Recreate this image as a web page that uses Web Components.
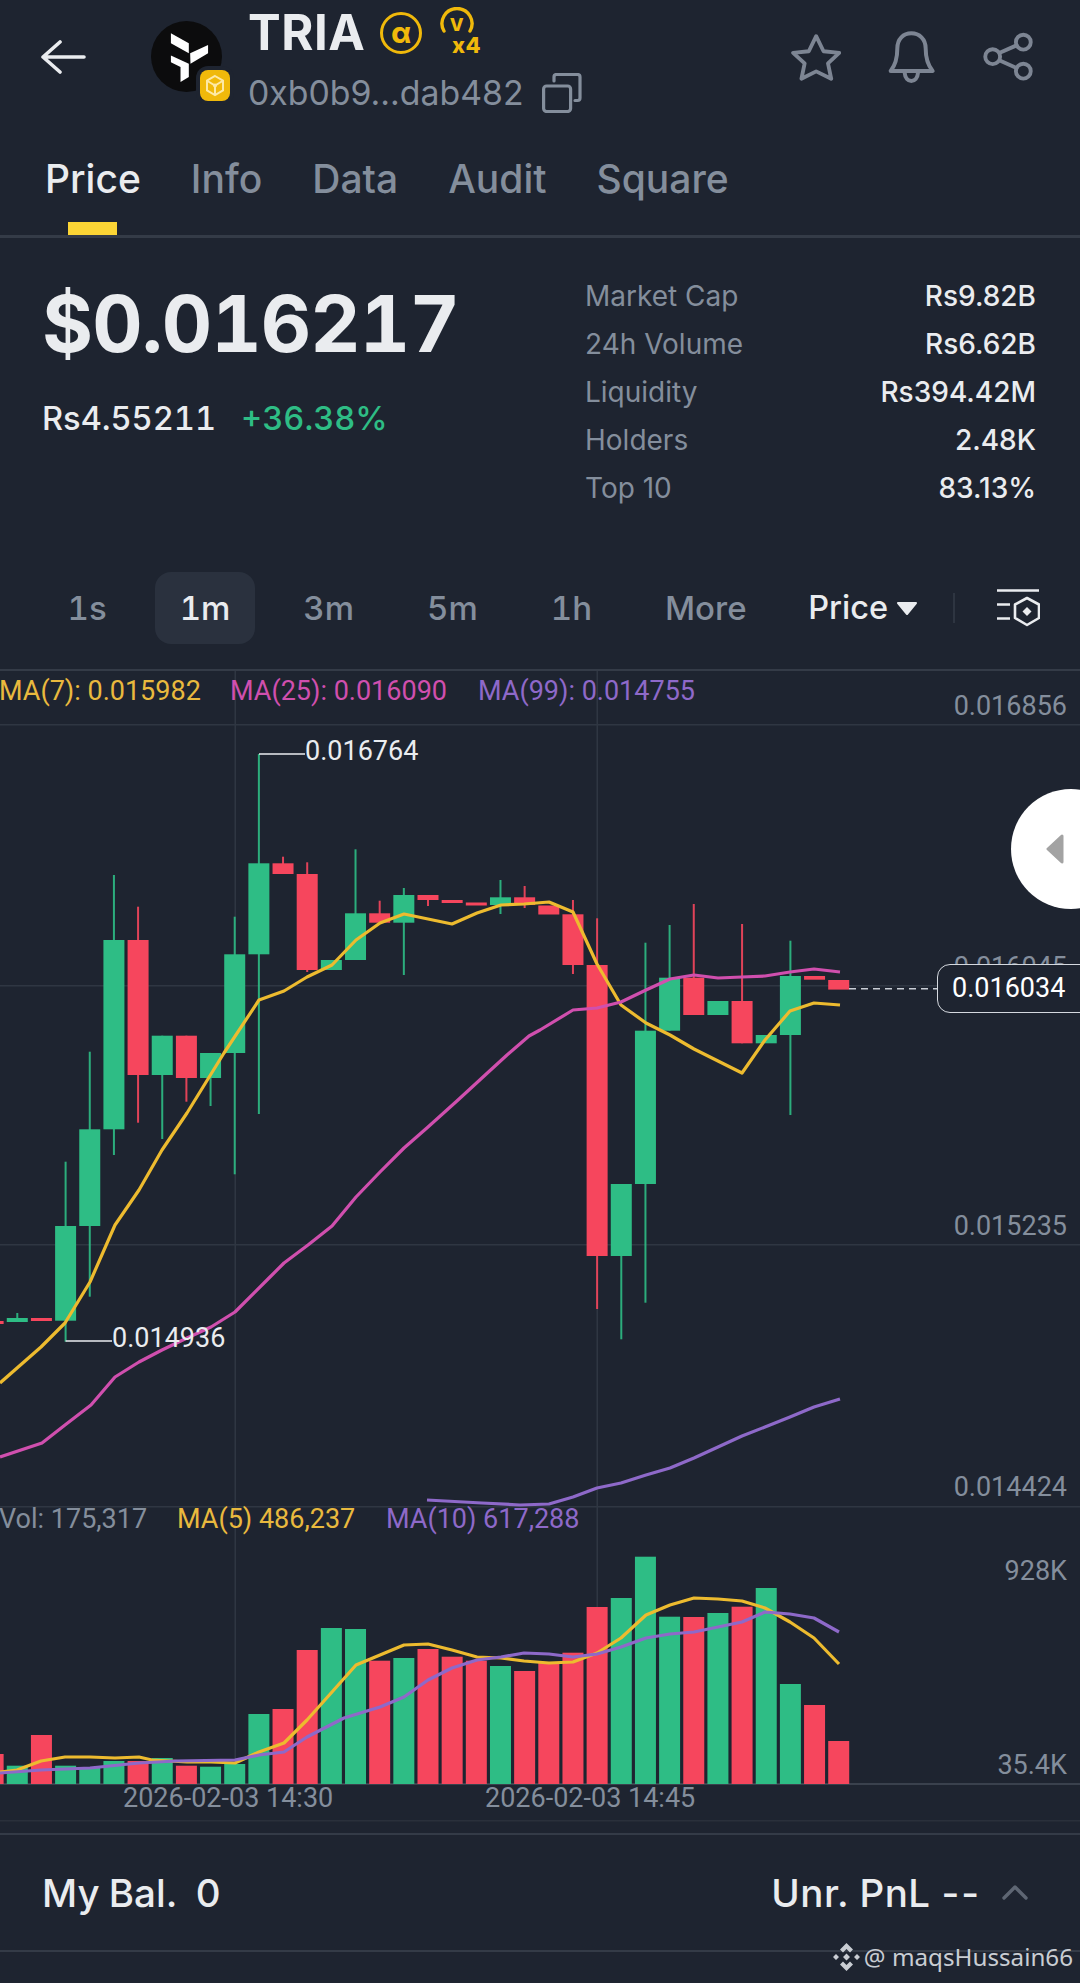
<!DOCTYPE html>
<html>
<head>
<meta charset="utf-8">
<title>TRIA</title>
<style>
  html, body { margin: 0; padding: 0; background: #1e2430; }
  body { width: 1080px; height: 1983px; overflow: hidden; position: relative; font-family: Inter, "Liberation Sans", sans-serif; color: #eaecef; }
</style>
</head>
<body>
  <token-header>
    <span slot="name">TRIA</span>
    <span slot="address">0xb0b9...dab482</span>
  </token-header>
  <tab-bar>
    <tab-item active>Price</tab-item>
    <tab-item>Info</tab-item>
    <tab-item>Data</tab-item>
    <tab-item>Audit</tab-item>
    <tab-item>Square</tab-item>
  </tab-bar>
  <price-panel>
    <span slot="price">$0.016217</span>
    <span slot="local">Rs4.55211</span>
    <span slot="change">+36.38%</span>
    <stat-row label="Market Cap">Rs9.82B</stat-row>
    <stat-row label="24h Volume">Rs6.62B</stat-row>
    <stat-row label="Liquidity">Rs394.42M</stat-row>
    <stat-row label="Holders">2.48K</stat-row>
    <stat-row label="Top 10">83.13%</stat-row>
  </price-panel>
  <interval-bar>
    <interval-tab>1s</interval-tab>
    <interval-tab active>1m</interval-tab>
    <interval-tab>3m</interval-tab>
    <interval-tab>5m</interval-tab>
    <interval-tab>1h</interval-tab>
    <interval-tab>More</interval-tab>
  </interval-bar>
  <kline-chart></kline-chart>
  <balance-bar>
    <span slot="left" style="word-spacing:-1px">My Bal.&nbsp; 0</span>
    <span slot="right">Unr. PnL <span style="letter-spacing:2px">--</span></span>
  </balance-bar>
  <water-mark>@ maqsHussain66</water-mark>

<script>
class TokenHeader extends HTMLElement {
  connectedCallback() {
    this.attachShadow({ mode: 'open' });
    this.shadowRoot.innerHTML = `
      <style>
        :host { display: flex; height: 120px; box-sizing: border-box; padding: 0 47px 0 40px; align-items: flex-start; }
        .back { width: 46px; height: 34px; margin-top: 40px; flex: none; }
        .logo { position: relative; width: 71px; height: 71px; margin: 21px 26px 0 65px; flex: none; }
        .logo svg { display: block; }
        .chain { position: absolute; left: 49px; top: 49px; width: 30px; height: 31px; background: #f0b90b; border-radius: 8px; box-shadow: 0 0 0 4px #1e2430; }
        .info { padding-top: 3px; flex: none; }
        .name { display: flex; align-items: center; height: 60px; font: 700 49px/60px Inter, sans-serif; color: #eaecef; letter-spacing: .5px; }
        .alpha { width: 36px; height: 36px; margin-left: 15px; border: 3.5px solid #f0b90b; border-radius: 50%; display: flex; align-items: center; justify-content: center; color: #f0b90b; font: 800 28px/30px Inter, sans-serif; letter-spacing: 0; }
        .multi { margin: 3.5px 0 0 17px; display: block; align-self: flex-start; }
        .addr { display: flex; align-items: center; height: 40px; margin-top: 10px; gap: 18px; font: 400 33.800px/40px Inter, sans-serif; color: #848e9c; }
        .actions { margin-left: auto; display: flex; gap: 46px; margin-top: 31px; flex: none; align-items: center; }
        svg.a { fill: none; stroke: #7d8593; stroke-linecap: round; stroke-linejoin: round; display: block; }
      </style>
      <svg class="back" viewBox="0 0 46 34" fill="none" stroke="#eaecef" stroke-width="3.6" stroke-linecap="round" stroke-linejoin="round"><path d="M44 17H3M20 2 3 17l17 15"/></svg>
      <div class="logo">
        <svg width="71" height="71" viewBox="8 11 214 214">
          <circle cx="115" cy="118" r="107" fill="#0c0c0d"/>
          <path fill="#fff" d="M68 48l54 30v30L68 78zM126 108l54-25v25l-53 32zM68 115l54 25v40l-25 15v-45l-29-15z"/>
        </svg>
        <div class="chain">
          <svg width="30" height="31" viewBox="0 0 30 31" fill="none" stroke="#fde9a6" stroke-width="2"><path d="M15 6l8 4.6v9.8L15 25l-8-4.6v-9.8z"/><path d="M7.5 11 15 15.5 22.5 11M15 15.5V24"/><circle cx="15" cy="15.5" r="2" fill="#fde9a6" stroke="none"/></svg>
        </div>
      </div>
      <div class="info">
        <div class="name">
          <slot name="name"></slot>
          <span class="alpha">α</span>
          <svg class="multi" width="48" height="56" viewBox="0 0 48 56">
            <path d="M5 24A15 15 0 1 1 31 24" fill="none" stroke="#f0b90b" stroke-width="3.4" stroke-linecap="round"/>
            <text x="18" y="24" text-anchor="middle" font-family="Inter, sans-serif" font-weight="800" font-size="18" fill="#f0b90b">V</text>
            <text x="13" y="46" font-family="Inter, sans-serif" font-weight="800" font-size="22" fill="#f0b90b">x4</text>
          </svg>
        </div>
        <div class="addr">
          <slot name="address"></slot>
          <svg width="40" height="40" viewBox="0 0 40 40" fill="none" stroke="#848e9c" stroke-width="3.2" stroke-linejoin="round" stroke-linecap="round">
            <rect x="1.6" y="13" width="27" height="25.5" rx="3"/>
            <path d="M12 8V4a2.5 2.5 0 0 1 2.5-2.5H35.500a2.500 2.500 0 0 1 2.500 2.500V25a2.500 2.500 0 0 1-2.500 2.500H33"/>
          </svg>
        </div>
      </div>
      <div class="actions">
        <svg class="a" width="50" height="48" viewBox="40 35 155 150" stroke-width="12"><path d="M118 45l23 47 49 5-35 33 10 48-47-23-46 23 10-48-36-33 49-5z"/></svg>
        <svg class="a" width="50" height="52" viewBox="333 32 148 156" stroke-width="12"><path d="M343 152c18-22 20-45 20-68 0-28 18-45 42-45s43 17 43 45c0 23 2 46 21 68zM385 157c2 33 38 33 40 0"/></svg>
        <svg class="a" width="50" height="50" viewBox="620 35 155 152" stroke-width="12"><circle cx="745" cy="65" r="23"/><circle cx="650" cy="110" r="23"/><circle cx="745" cy="155" r="23"/><path d="M672 98l52-23M672 122l52 23"/></svg>
      </div>
    `;
  }
}
customElements.define('token-header', TokenHeader);

class TabBar extends HTMLElement {
  connectedCallback() {
    this.attachShadow({ mode: 'open' });
    this.shadowRoot.innerHTML = `
      <style>
        :host { display: flex; box-sizing: border-box; height: 118px; padding: 36px 0 0 45px; gap: 50px; border-bottom: 3px solid #343b47; }
      </style>
      <slot></slot>
    `;
  }
}
customElements.define('tab-bar', TabBar);

class TabItem extends HTMLElement {
  connectedCallback() {
    this.attachShadow({ mode: 'open' });
    this.shadowRoot.innerHTML = `
      <style>
        :host { display: flex; flex-direction: column; align-items: center; font: 500 39px/46px Inter, sans-serif; color: #848e9c; }
        :host([active]) { color: #eaecef; }
        .bar { width: 49px; height: 13px; margin-top: 20px; background: transparent; }
        :host([active]) .bar { background: #fcd535; }
      </style>
      <slot></slot><div class="bar"></div>
    `;
  }
}
customElements.define('tab-item', TabItem);

class PricePanel extends HTMLElement {
  connectedCallback() {
    this.attachShadow({ mode: 'open' });
    this.shadowRoot.innerHTML = `
      <style>
        :host { display: flex; box-sizing: border-box; height: 298px; padding: 0 44px 0 42px; justify-content: space-between; }
        .left { padding-top: 41px; }
        .price { font: 700 78px/90px Inter, sans-serif; color: #eaecef; font-variant-numeric: tabular-nums; letter-spacing: -.9px; }
        .sub { display: flex; gap: 25px; margin-top: 29px; font: 500 32.600px/40px Inter, sans-serif; color: #eaecef; font-variant-numeric: tabular-nums; }
        .chg { color: #2ebd85; }
        .stats { width: 451px; padding-top: 34px; }
      </style>
      <div class="left">
        <div class="price"><slot name="price"></slot></div>
        <div class="sub"><slot name="local"></slot><span class="chg"><slot name="change"></slot></span></div>
      </div>
      <div class="stats"><slot></slot></div>
    `;
  }
}
customElements.define('price-panel', PricePanel);

class StatRow extends HTMLElement {
  connectedCallback() {
    this.attachShadow({ mode: 'open' });
    this.shadowRoot.innerHTML = `
      <style>
        :host { display: flex; justify-content: space-between; height: 48px; font: 500 28px/48px Inter, sans-serif; color: #eaecef; }
        .l { font-weight: 400; color: #848e9c; }
      </style>
      <span class="l"></span><span><slot></slot></span>
    `;
    this.shadowRoot.querySelector('.l').textContent = this.getAttribute('label');
  }
}
customElements.define('stat-row', StatRow);

class IntervalBar extends HTMLElement {
  connectedCallback() {
    this.attachShadow({ mode: 'open' });
    this.shadowRoot.innerHTML = `
      <style>
        :host { display: flex; box-sizing: border-box; height: 135px; padding: 36px 40px 0 43px; gap: 24px; align-items: flex-start; border-bottom: 2px solid #343b47; }
        .right { margin-left: auto; height: 72px; display: flex; align-items: center; font: 500 32.500px/72px Inter, sans-serif; color: #eaecef; }
        .tri { margin-left: 8px; display: block; }
        .div { width: 2px; height: 30px; background: #2e3541; margin: 0 42px 0 35px; }
        .icon { display: block; }
      </style>
      <slot></slot>
      <div class="right">
        <span>Price</span>
        <svg class="tri" width="22" height="13" viewBox="0 0 22 13"><path d="M2 1h18l-9 11z" fill="#eaecef" stroke="#eaecef" stroke-width="2" stroke-linejoin="round"/></svg>
        <div class="div"></div>
        <svg class="icon" width="43" height="38" viewBox="0 0 43 38" fill="none" stroke="#eaecef" stroke-width="2.6">
          <path d="M0 1.500H42M0 15.500H13M0 29.500H13" />
          <path d="M30 9l12 6.500v13.500L30 36l-12-7V15.500z" stroke-linejoin="round"/>
          <path d="M30 18l4.500 4.500L30 27l-4.500-4.500z" fill="#eaecef" stroke="none"/>
        </svg>
      </div>
    `;
  }
}
customElements.define('interval-bar', IntervalBar);

class IntervalTab extends HTMLElement {
  connectedCallback() {
    this.attachShadow({ mode: 'open' });
    this.shadowRoot.innerHTML = `
      <style>
        :host { display: block; height: 72px; padding: 0 24.5px; border-radius: 16px; font: 500 33px/72px Inter, sans-serif; color: #848e9c; font-variant-numeric: tabular-nums; }
        :host([active]) { background: #2a313e; color: #eaecef; }
      </style>
      <slot></slot>
    `;
  }
}
customElements.define('interval-tab', IntervalTab);

const GREEN = '#2ebd85', RED = '#f6465d';
const xAt = i => 65.6 + 24.16 * i;

// i, colour, body top, body bottom, wick top, wick bottom
const CANDLES = [
  [-3,'r',1321,1324], [-2,'g',1318,1322,1313,1322], [-1,'r',1318,1321],
  [0,'g',1226,1320.7,1161.7,1341.7], [1,'g',1129.3,1226,1051.7,1296.7], [2,'g',940,1129.3,875,1155],
  [3,'r',940,1075,906.7,1122.7], [4,'g',1035.7,1075,1035.7,1139], [5,'r',1035.7,1078,1035.7,1101.7],
  [6,'g',1053,1078,1053,1106], [7,'g',954.3,1053,916.7,1174.3], [8,'g',863.3,954.3,754,1114],
  [9,'r',863.3,874,856.7,874], [10,'r',874,970,862.3,972], [11,'g',960,970],
  [12,'g',913.3,960,849.3,960], [13,'r',913.3,922.7,900.7,922.7], [14,'g',895,922.7,888,975],
  [15,'r',895,900,895,906], [16,'r',900,903], [17,'r',902.500,905.500],
  [18,'g',897.3,905,880,914], [19,'r',897.3,905,886,908], [20,'r',905.500,914.500],
  [21,'r',914.3,965,900,974], [22,'r',965,1256,918.3,1309], [23,'g',1184,1256,1184,1339.3],
  [24,'g',1030.7,1184,942.7,1302.7], [25,'g',977.7,1030.7,925,1030.7], [26,'r',977.7,1015,904,1015],
  [27,'g',1001,1015], [28,'r',1001,1043.3,924,1043.3], [29,'g',1035,1043.3],
  [30,'g',976,1035,940.7,1115], [31,'r',976,979.700], [32,'r',980,989.600]
];

// i, colour, top of the volume bar
const VOLS = [
  [-3,'r',1754],[-2,'g',1765.7],[-1,'r',1735],[0,'g',1765.7],[1,'g',1768],[2,'g',1761],[3,'r',1761],
  [4,'g',1758],[5,'r',1765.7],[6,'g',1766.7],[7,'g',1764],[8,'g',1714],[9,'r',1709],[10,'r',1650],
  [11,'g',1628],[12,'g',1629],[13,'r',1660.7],[14,'g',1658],[15,'r',1649],[16,'r',1656.7],[17,'r',1660.7],
  [18,'g',1666],[19,'r',1671],[20,'r',1663],[21,'r',1652.7],[22,'r',1607],[23,'g',1598],[24,'g',1556.7],
  [25,'g',1616.7],[26,'r',1617],[27,'g',1613],[28,'r',1606.7],[29,'g',1588],[30,'g',1684],[31,'r',1705],[32,'r',1741]
];

const LINES = [
  ['#edbb2f', '0,1383 41,1347 65,1323 90,1282 115,1225 139,1190 162,1150 187,1113 195,1100 224,1053 259,1000 284,991 307,977 332,965 356,940 380,923 404,914 428,919 452,924 477,913 501,905 524,904 549,902 573,912 597,964 621,1005 646,1023 670,1035 694,1049 718,1061 742,1073 765,1040 790,1011 814,1003 840,1005'],
  ['#d04fae', '0,1457 42,1443 65,1425 91,1405 115,1377 139,1362 162,1350 187,1338 211,1327 235,1312 269,1278 284,1263 308,1245 332,1226 356,1197 380,1172 404,1148 428,1127 458,1100 483,1077 507,1055 529,1036 540,1030 573,1010 597,1008 621,1002 646,990 670,979 694,975 718,978 742,977 765,976 790,972 814,969 840,972'],
  ['#8e69c9', '427,1500 482,1503 520,1505 549,1504 573,1497 597,1488 621,1483 646,1475 670,1468 694,1458 718,1447 742,1436 765,1427 790,1417 814,1407 840,1399'],
  ['#edbb2f', '0,1772 17,1770 41,1761 65,1757 90,1757 115,1758 139,1757 152,1760 187,1762 211,1762 235,1763 259,1752 284,1743 307,1720 332,1692 356,1665 380,1655 404,1645 428,1644 452,1650 477,1657 501,1658 524,1661 549,1663 573,1662 597,1653 621,1638 646,1615 670,1605 694,1598 718,1599 742,1601 765,1608 790,1622 814,1638 839,1664'],
  ['#8e69c9', '0,1773 41,1770 90,1768 139,1763 176,1761 235,1760 259,1755 284,1752 307,1737 344,1718 380,1707 404,1697 428,1680 452,1668 477,1660 501,1657 524,1653 549,1654 573,1657 597,1654 621,1647 646,1638 670,1634 694,1632 718,1627 742,1622 765,1612 790,1614 814,1618 839,1632']
];

// text, centre y, anchor side, offset, colour
const LABELS = [
  ['MA(7): 0.015982', 691, 'left', -1, '#e9b93e'],
  ['MA(25): 0.016090', 691, 'left', 230, '#d04fae'],
  ['MA(99): 0.014755', 691, 'left', 478, '#8e69c9'],
  ['Vol: 175,317', 1519, 'left', -1, '#848e9c'],
  ['MA(5) 486,237', 1519, 'left', 177, '#e9b93e'],
  ['MA(10) 617,288', 1519, 'left', 386, '#8e69c9'],
  ['0.016856', 706, 'right', 13, '#848e9c'],
  ['0.016045', 967, 'right', 13, '#848e9c'],
  ['0.015235', 1226, 'right', 13, '#848e9c'],
  ['0.014424', 1487, 'right', 13, '#848e9c'],
  ['928K', 1571, 'right', 13, '#848e9c'],
  ['35.4K', 1765, 'right', 13, '#848e9c'],
  ['2026-02-03 14:30', 1798, 'left', 123, '#848e9c'],
  ['2026-02-03 14:45', 1798, 'left', 485, '#848e9c'],
  ['0.016764', 751, 'left', 305, '#eaecef'],
  ['0.014936', 1338, 'left', 112, '#eaecef']
];

class KlineChart extends HTMLElement {
  connectedCallback() {
    this.attachShadow({ mode: 'open' });
    const TOP = 671;
    let svg = '';
    for (const y of [724, 985, 1244, 1506]) svg += `<rect x="0" y="${y}" width="1080" height="1.500" fill="#2f3642"/>`;
    for (const x of [234.5, 596.5]) svg += `<rect x="${x}" y="${TOP}" width="1.500" height="1113" fill="#2f3642"/>`;
    svg += `<rect x="0" y="1783" width="1080" height="2" fill="#3a414d"/><rect x="0" y="1820" width="1080" height="1.500" fill="#2a303b"/>`;
    for (const [i, c, t, b, wt, wb] of CANDLES) {
      const x = xAt(i), col = c === 'g' ? GREEN : RED;
      if (wt !== undefined) svg += `<rect x="${x - 1}" y="${wt}" width="2" height="${wb - wt}" fill="${col}" opacity=".9"/>`;
      svg += `<rect x="${x - 10.5}" y="${t}" width="21" height="${b - t}" fill="${col}"/>`;
    }
    for (const [i, c, t] of VOLS) {
      svg += `<rect x="${xAt(i) - 10.5}" y="${t}" width="21" height="${1784 - t}" fill="${c === 'g' ? GREEN : RED}"/>`;
    }
    for (const [col, pts] of LINES) svg += `<polyline points="${pts}" fill="none" stroke="${col}" stroke-width="3.200" stroke-linejoin="round"/>`;
    // high and low markers, last price dash
    svg += `<path d="M259 754H305M65.600 1341H112" stroke="#eaecef" stroke-width="1.500" fill="none"/>`;
    svg += `<path d="M849 988.700H937" stroke="#c9ced6" stroke-width="1.600" stroke-dasharray="7 5" fill="none"/>`;

    const labels = LABELS.map(([text, y, side, off, col]) =>
      `<span class="lb" style="top:${y - TOP}px;${side}:${off}px;color:${col}">${text}</span>`).join('');

    this.shadowRoot.innerHTML = `
      <style>
        :host { display: block; position: relative; height: 1162px; overflow: hidden; font: 400 27px/32px Roboto, sans-serif; }
        svg { display: block; }
        .lb { position: absolute; transform: translateY(-50%); white-space: nowrap; }
        .tag { position: absolute; left: 937px; top: ${964 - TOP}px; width: 160px; height: 49px; box-sizing: border-box; border: 1.500px solid #d5d9df; border-radius: 13px; background: #1e2430; color: #fff; padding-left: 14px; line-height: 46px; }
        .tab { position: absolute; left: 1011px; top: ${789 - TOP}px; width: 120px; height: 120px; border-radius: 50%; background: #fff; }
        .tab svg { position: absolute; left: 34px; top: 45px; }
      </style>
      <svg width="1080" height="1162" viewBox="0 ${TOP} 1080 1162">${svg}</svg>
      ${labels}
      <div class="tag">0.016034</div>
      <div class="tab"><svg width="20" height="30" viewBox="0 0 20 30"><path d="M17 2v26L3 15z" fill="#a3a3a3" stroke="#a3a3a3" stroke-width="3" stroke-linejoin="round"/></svg></div>
    `;
  }
}
customElements.define('kline-chart', KlineChart);

class BalanceBar extends HTMLElement {
  connectedCallback() {
    this.attachShadow({ mode: 'open' });
    this.shadowRoot.innerHTML = `
      <style>
        :host { display: flex; box-sizing: border-box; height: 119px; padding: 0 52px 0 42px; align-items: center; border-top: 2px solid #343b47; border-bottom: 2px solid #343b47; font: 500 38.500px/46px Inter, sans-serif; color: #eaecef; }
        .r { margin-left: auto; letter-spacing: .5px; }
        svg { display: block; margin-left: 21px; }
      </style>
      <slot name="left"></slot>
      <span class="r"><slot name="right"></slot></span>
      <svg width="26" height="15" viewBox="0 0 26 15" fill="none" stroke="#5e6673" stroke-width="3.400" stroke-linecap="round" stroke-linejoin="round"><path d="M2 13 13 2l11 11"/></svg>
    `;
  }
}
customElements.define('balance-bar', BalanceBar);

class WaterMark extends HTMLElement {
  connectedCallback() {
    this.attachShadow({ mode: 'open' });
    this.shadowRoot.innerHTML = `
      <style>
        :host { position: absolute; right: 7px; top: 1941px; display: flex; align-items: center; gap: 4px; height: 32px; font: 400 24.200px/32px "Noto Sans", sans-serif; color: #c9cdd3; white-space: nowrap; }
        svg { display: block; }
      </style>
      <svg width="27" height="28" viewBox="0 0 27 28" fill="#c9cdd3"><path d="M13.500 0 20 6.500 17 9.500 13.500 6 10 9.500 7 6.500zM13.500 28 20 21.500 17 18.500 13.500 22 10 18.500 7 21.500zM13.500 10.500 17 14 13.500 17.500 10 14zM0 14l3-3 3 3-3 3zM21 14l3-3 3 3-3 3z"/></svg>
      <slot></slot>
    `;
  }
}
customElements.define('water-mark', WaterMark);
</script>
</body>
</html>
